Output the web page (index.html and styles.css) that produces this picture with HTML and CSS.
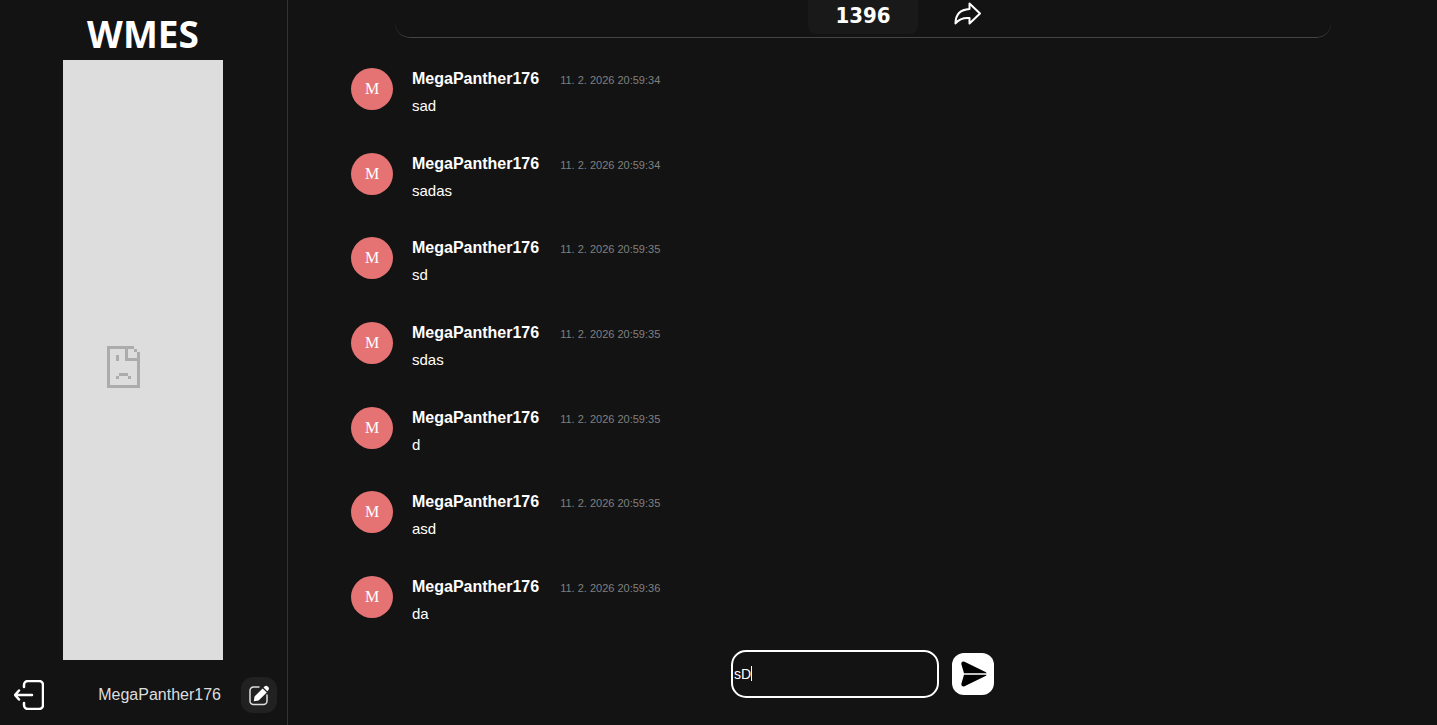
FILE: index.html
```html
<!DOCTYPE html>
<html lang="en">
<head>
<meta charset="utf-8">
<meta name="viewport" content="width=device-width, initial-scale=1">
<title>WMES</title>
<link rel="stylesheet" href="styles.css">
</head>
<body>
<div class="app">
  <aside class="sidebar">
    <h1 class="logo">WMES</h1>
    <div class="frame">
      <svg class="frame-icon" viewBox="0 0 11 14" shape-rendering="crispEdges" role="img" aria-label="Content unavailable">
        <path d="M0 0h9v1h1v1h1v12H0zM1 1v12h9V5H6V1zM7 1v3h3V2H9V1z" fill-rule="evenodd"/>
        <path d="M3 3h1v2H3zM4 9h3v1H4zM3 10h1v1H3zM7 10h1v1H7z"/>
      </svg>
    </div>
    <footer class="account">
      <button class="icon-button" type="button" aria-label="Log out">
        <svg class="logout-icon" viewBox="0 0 30 30"><path d="M10 7V5a4 4 0 0 1 4-4h11a4 4 0 0 1 4 4v20a4 4 0 0 1-4 4H14a4 4 0 0 1-4-4v-2M18 15H1M5 10.500L1 15l4 4.500"/></svg>
      </button>
      <span class="account-name">MegaPanther176</span>
      <button class="edit-button" type="button" aria-label="Edit profile">
        <svg class="edit-icon" viewBox="0 0 22 22"><path class="edit-frame" d="M11 3H5.500A3.500 3.500 0 0 0 2 6.500V17a3.500 3.500 0 0 0 3.500 3.500h10A3.500 3.500 0 0 0 19 17v-6"/><path class="edit-pen" d="M5.800 17.200l.7-4.800 8.100-8 4.200 4.100-8.200 8zM15.500 3.500l1.300-1.300q1.500-1.200 2.900.2l.6.600q1.300 1.400.1 2.900l-1.100 1.300z"/></svg>
      </button>
    </footer>
  </aside>
  <main class="chat">
    <header class="topbar">
      <output class="counter">1396</output>
      <button class="icon-button share-button" type="button" aria-label="Share">
        <svg class="share-icon" viewBox="0 0 28 24"><path d="M15.500 1.500L26 11.500 15.500 21.500V16C8 15.500 4.500 17.500 1.500 21.500 1.500 12 7 7.500 15.500 7z"/></svg>
      </button>
    </header>
    <ol class="messages">
      <li class="message"><span class="avatar">M</span><div class="message-body"><div class="message-head"><strong class="author">MegaPanther176</strong><time class="time">11. 2. 2026 20:59:34</time></div><p class="text">sad</p></div></li>
      <li class="message"><span class="avatar">M</span><div class="message-body"><div class="message-head"><strong class="author">MegaPanther176</strong><time class="time">11. 2. 2026 20:59:34</time></div><p class="text">sadas</p></div></li>
      <li class="message"><span class="avatar">M</span><div class="message-body"><div class="message-head"><strong class="author">MegaPanther176</strong><time class="time">11. 2. 2026 20:59:35</time></div><p class="text">sd</p></div></li>
      <li class="message"><span class="avatar">M</span><div class="message-body"><div class="message-head"><strong class="author">MegaPanther176</strong><time class="time">11. 2. 2026 20:59:35</time></div><p class="text">sdas</p></div></li>
      <li class="message"><span class="avatar">M</span><div class="message-body"><div class="message-head"><strong class="author">MegaPanther176</strong><time class="time">11. 2. 2026 20:59:35</time></div><p class="text">d</p></div></li>
      <li class="message"><span class="avatar">M</span><div class="message-body"><div class="message-head"><strong class="author">MegaPanther176</strong><time class="time">11. 2. 2026 20:59:35</time></div><p class="text">asd</p></div></li>
      <li class="message"><span class="avatar">M</span><div class="message-body"><div class="message-head"><strong class="author">MegaPanther176</strong><time class="time">11. 2. 2026 20:59:36</time></div><p class="text">da</p></div></li>
    </ol>
    <form class="composer">
      <div class="composer-field">
        <input class="composer-input" id="message" type="text" value="sD" aria-label="Message" autocomplete="off" spellcheck="false">
        <span class="caret"></span>
      </div>
      <button class="send-button" type="submit" aria-label="Send">
        <svg class="send-icon" viewBox="0 0 26 26"><path d="M.3 3Q.3-.3 3.500.8L24.500 11Q25.500 11.500 25.500 12.200H3zM.3 23Q.3 26.300 3.500 25.200L24.500 15Q25.500 14.500 25.500 13.800H3z"/></svg>
      </button>
    </form>
  </main>
</div>
</body>
</html>
```

FILE: styles.css
```css
* {
  box-sizing: border-box;
}

body {
  margin: 0;
  background: #131313;
  color: #fff;
  font: 16px/20px "Liberation Sans", Arial, sans-serif;
}

button {
  padding: 0;
  border: 0;
  background: none;
  color: inherit;
  cursor: pointer;
}

svg {
  display: block;
}

.app {
  display: grid;
  grid-template-columns: 288px 1fr;
  min-height: 100vh;
}

.sidebar {
  display: flex;
  flex-direction: column;
  padding-right: 1px;
  border-right: 1px solid #333;
}

.logo {
  margin: 0;
  padding-top: 8px;
  font: bold 37px/52px "Noto Sans", "Open Sans", sans-serif;
  text-align: center;
}

.frame {
  display: flex;
  flex: 1;
  align-items: center;
  align-self: center;
  width: 160px;
  padding: 14px 0 0 44px;
  background: #ddd;
}

.frame-icon {
  width: 33px;
  height: 42px;
  fill: #acacac;
}

.account {
  display: flex;
  align-items: center;
  height: 65px;
  padding: 4px 9px 0 14px;
}

.account-name {
  margin-left: auto;
  margin-right: 20px;
  color: #ddd;
}

.logout-icon {
  width: 30px;
  height: 30px;
  fill: none;
  stroke: #fff;
  stroke-width: 2.5;
  stroke-linecap: round;
  stroke-linejoin: round;
}

.edit-button {
  display: grid;
  place-items: center;
  width: 36px;
  height: 36px;
  border-radius: 12px;
  background: #212121;
}

.edit-icon {
  width: 22px;
  height: 22px;
}

.edit-frame {
  fill: none;
  stroke: #ddd;
  stroke-width: 1.5;
  stroke-linecap: round;
}

.edit-pen {
  fill: #fff;
}

.chat {
  display: flex;
  flex-direction: column;
  min-width: 0;
}

.topbar {
  display: grid;
  grid-template-columns: 1fr auto 1fr;
  column-gap: 36px;
  align-items: start;
  height: 38px;
  margin: 0 106px 0 107px;
  border-bottom: 1px solid #444;
  border-radius: 0 0 15px 15px;
}

.counter {
  grid-column: 2;
  width: 110px;
  height: 34px;
  border-radius: 0 0 8px 8px;
  background: #191919;
  font: bold 22px/32px "DejaVu Sans Condensed", "DejaVu Sans", sans-serif;
  text-align: center;
}

.share-button {
  justify-self: start;
  padding-top: 2px;
}

.share-icon {
  width: 28px;
  height: 24px;
  fill: none;
  stroke: #fff;
  stroke-width: 2;
  stroke-linejoin: round;
}

.messages {
  display: flex;
  flex: 1;
  flex-direction: column;
  justify-content: space-between;
  margin: 0;
  padding: 30px 63px 0;
  list-style: none;
}

.message {
  display: flex;
  gap: 19px;
}

.avatar {
  display: grid;
  place-items: center;
  width: 42px;
  height: 42px;
  border-radius: 50%;
  background: #e57373;
  font-family: "Liberation Serif", "Times New Roman", serif;
}

.message-head {
  display: flex;
  align-items: center;
  gap: 21px;
  height: 20px;
}

.author {
  padding-top: 2px;
}

.time {
  padding-top: 4px;
  color: #808080;
  font-size: 11px;
}

.text {
  margin: 8px 0 0;
  font-size: 15px;
}

.composer {
  display: flex;
  align-items: center;
  justify-content: center;
  gap: 13px;
  padding: 26px 0 27px;
}

.composer-field {
  position: relative;
}

.composer-input {
  display: block;
  width: 208px;
  height: 48px;
  padding: 0 1px;
  border: 2px solid #fff;
  border-radius: 15px;
  outline: 0;
  background: transparent;
  color: #fff;
  font: 14px "Liberation Sans", Arial, sans-serif;
}

.caret {
  position: absolute;
  top: 16px;
  left: 20px;
  width: 1px;
  height: 15px;
  background: #fff;
}

.composer-input:focus + .caret {
  display: none;
}

.send-button {
  display: grid;
  place-items: center;
  width: 42px;
  height: 42px;
  padding-left: 2px;
  border-radius: 12px;
  background: #fff;
}

.send-icon {
  width: 26px;
  height: 26px;
  fill: #000;
}
```
